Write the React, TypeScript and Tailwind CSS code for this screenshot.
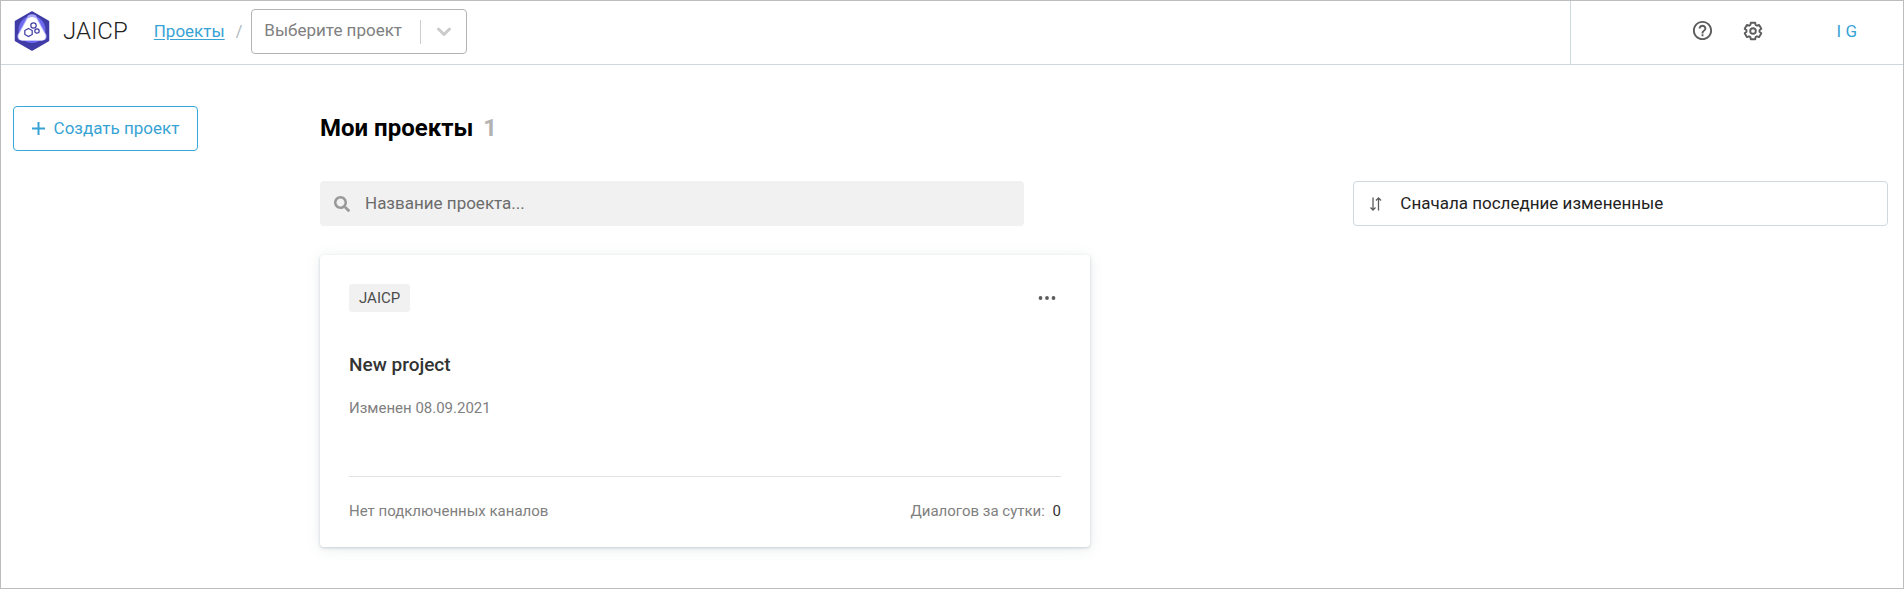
import { useState } from 'react';
import { FaSearch } from 'react-icons/fa';
import { MdHelpOutline } from 'react-icons/md';

interface Project {
  id: string;
  type: string;
  name: string;
  changed: string;
  channels: string;
  dialogs: number;
}

const projects: Project[] = [
  {
    id: 'new-project',
    type: 'JAICP',
    name: 'New project',
    changed: '08.09.2021',
    channels: 'Нет подключенных каналов',
    dialogs: 0,
  },
];

function Logo() {
  return (
    <svg width="36" height="40" viewBox="0 0 36 40" aria-hidden="true">
      <path d="M18 1 L34.5 10.5 V29.5 L18 39 L1.5 29.5 V10.5 Z" fill="#403ca6" stroke="#403ca6" strokeWidth="1.5" strokeLinejoin="round" />
      <circle cx="18" cy="18.500" r="13.500" fill="#6c69ee" />
      <path d="M14 4.500 Q18 2 22 4.500 L32.500 24 Q33 29 29 29.500 H7 Q3 29 3.500 24 Z" fill="#aaa8fa" />
      <path d="M13.500 7.500 Q18 4.500 22.500 7.500 L31.500 24 Q32.500 28.500 28 29.500 H8 Q3.500 28.500 4.500 24 Z" fill="#fff" />
      <g fill="none" stroke="#403ca6" strokeWidth="1.2">
        <path d="M14.500 17.500 L18.200 19.500 V23.500 L14.500 25.500 L10.800 23.500 V19.500 Z" />
        <circle cx="19.500" cy="14.500" r="2.700" />
        <circle cx="23" cy="20" r="2.200" />
      </g>
    </svg>
  );
}

function GearIcon() {
  return (
    <svg width="20" height="20" viewBox="0 0 20 20" fill="none" stroke="currentColor" strokeWidth="1.900" strokeLinejoin="round" aria-hidden="true">
      <path d="M7.4 3.9 L7.8 1.7 H12.2 L12.6 3.9 L14 4.7 L16.1 3.9 L18.3 7.8 L16.500 9.2 V10.8 L18.3 12.2 L16.1 16.1 L14 15.3 L12.6 16.1 L12.2 18.3 H7.8 L7.4 16.1 L6 15.3 L3.9 16.1 L1.7 12.2 L3.500 10.8 V9.2 L1.7 7.8 L3.9 3.9 L6 4.7 Z" />
      <circle cx="10" cy="10" r="2.800" />
    </svg>
  );
}

function Header() {
  return (
    <header className="flex h-16 border-b border-[#cdd7de]">
      <div className="flex flex-1 items-start">
        <a href="#home" className="ml-[13px] mt-[10px] flex items-center gap-[13px] text-2xl font-light text-[#222]">
          <Logo />
          JAICP
        </a>
        <nav className="ml-[26px] mt-2 flex h-[45px] items-center">
          <a href="#projects" className="text-[17px] text-[#37a3d5] underline underline-offset-2">
            Проекты
          </a>
          <span className="ml-[11px] text-[#adb5bb]">/</span>
        </nav>
        <div className="relative ml-[9px] mt-2 flex h-[45px] w-[216px] items-center rounded border border-[#b3b3b3]">
          <select
            aria-label="Выберите проект"
            className="h-full w-full appearance-none bg-transparent pl-3 pb-[2px] text-[17px] text-[#808080] outline-none"
          >
            <option>Выберите проект</option>
          </select>
          <span className="pointer-events-none absolute right-0 flex h-6 w-[46px] items-center justify-center border-l border-[#ccc]">
            <svg width="16" height="10" viewBox="0 0 16 10" fill="none" stroke="#ccc" strokeWidth="3" strokeLinecap="round" strokeLinejoin="round" aria-hidden="true">
              <path d="M2.500 2 L8 7.500 L13.500 2" />
            </svg>
          </span>
        </div>
      </div>
      <div className="flex w-[333px] items-center justify-end border-l border-[#cdd7de] pr-[46px] pb-1">
        <button type="button" aria-label="Помощь" className="mr-[29px] text-[#5c5c5c]">
          <MdHelpOutline size={23} />
        </button>
        <button type="button" aria-label="Настройки" className="mr-[74px] text-[#5c5c5c]">
          <GearIcon />
        </button>
        <button type="button" className="pt-[2px] text-[17px] text-[#37a3d5]">
          I G
        </button>
      </div>
    </header>
  );
}

function ProjectCard({ project }: { project: Project }) {
  return (
    <article className="rounded bg-white px-[29px] pt-[29px] pb-5 shadow-[0_1px_3px_rgba(90,110,130,0.28),0_2px_14px_rgba(90,110,130,0.14)]">
      <div className="flex items-center justify-between">
        <span className="flex h-7 items-center rounded-[3px] bg-[#f1f1f1] px-[10px] text-[15px] text-[#4c4c4c]">
          {project.type}
        </span>
        <button type="button" aria-label="Меню проекта" className="mr-[5px]">
          <svg width="18" height="4" viewBox="0 0 18 4" fill="#5c5c5c" aria-hidden="true">
            <circle cx="2.500" cy="2" r="1.900" />
            <circle cx="9" cy="2" r="1.900" />
            <circle cx="15.500" cy="2" r="1.900" />
          </svg>
        </button>
      </div>
      <h2 className="mt-[41px] text-[19px] leading-6 font-medium text-[#333]">{project.name}</h2>
      <p className="mt-[19px] text-[15px] leading-6 text-[#808080]">Изменен {project.changed}</p>
      <div className="mt-14 flex justify-between border-t border-[#e2e3e5] pt-[22px] pb-1 text-[15px] leading-6 text-[#808080]">
        <span>{project.channels}</span>
        <span>
          Диалогов за сутки: <span className="ml-1 text-[#333]">{project.dialogs}</span>
        </span>
      </div>
    </article>
  );
}

export default function App() {
  const [query, setQuery] = useState('');
  const visible = projects.filter((p) => p.name.toLowerCase().includes(query.toLowerCase()));

  return (
    <div className="min-h-screen border border-[#bdbdbd] bg-white font-[Roboto,sans-serif]">
      <Header />
      <div className="flex pt-[41px] pr-[15px] pl-3">
        <aside className="w-[307px] shrink-0">
          <button
            type="button"
            className="flex h-[45px] w-[185px] items-center justify-center gap-[9px] rounded border border-[#37a9d8] text-[17px] text-[#37a3d5]"
          >
            <svg width="13" height="13" viewBox="0 0 13 13" stroke="currentColor" strokeWidth="2" aria-hidden="true">
              <path d="M6.500 0 V13 M0 6.500 H13" />
            </svg>
            Создать проект
          </button>
        </aside>
        <main className="min-w-0 flex-1">
          <h1 className="flex h-[43px] items-center gap-[10px] text-2xl font-bold text-black">
            Мои проекты <span className="text-[#b3b3b3]">{projects.length}</span>
          </h1>
          <div className="mt-8 flex justify-between">
            <label className="flex h-[45px] w-[44.9%] items-center rounded bg-[#f1f1f1] pl-[14px]">
              <FaSearch size={16} className="shrink-0 text-[#999]" aria-hidden="true" />
              <input
                type="search"
                aria-label="Название проекта"
                value={query}
                onChange={(e) => setQuery(e.target.value)}
                placeholder="Название проекта..."
                className="ml-[15px] h-full min-w-0 flex-1 bg-transparent pb-[2px] text-[17px] text-[#333] outline-none placeholder:text-[#6b6b6b]"
              />
            </label>
            <div className="relative flex h-[45px] w-[34.1%] items-center rounded border border-[#cdd7dc]">
              <svg className="pointer-events-none absolute left-4" width="13" height="14" viewBox="0 0 13 14" fill="none" stroke="#5c5c5c" strokeWidth="1.300" aria-hidden="true">
                <path d="M3 0.500 V12.500 M0.500 10.500 L3 13 L5.500 10.500" />
                <path d="M8.500 13.500 V1.500 M6 3.500 L8.500 1 L11 3.500" />
              </svg>
              <select
                aria-label="Сортировка"
                className="h-full w-full appearance-none bg-transparent pl-[46px] text-[17px] text-[#222] outline-none"
              >
                <option>Сначала последние измененные</option>
              </select>
            </div>
          </div>
          <section className="mt-[29px] grid grid-cols-2 gap-7 pb-10">
            {visible.map((project) => (
              <ProjectCard key={project.id} project={project} />
            ))}
          </section>
        </main>
      </div>
    </div>
  );
}
